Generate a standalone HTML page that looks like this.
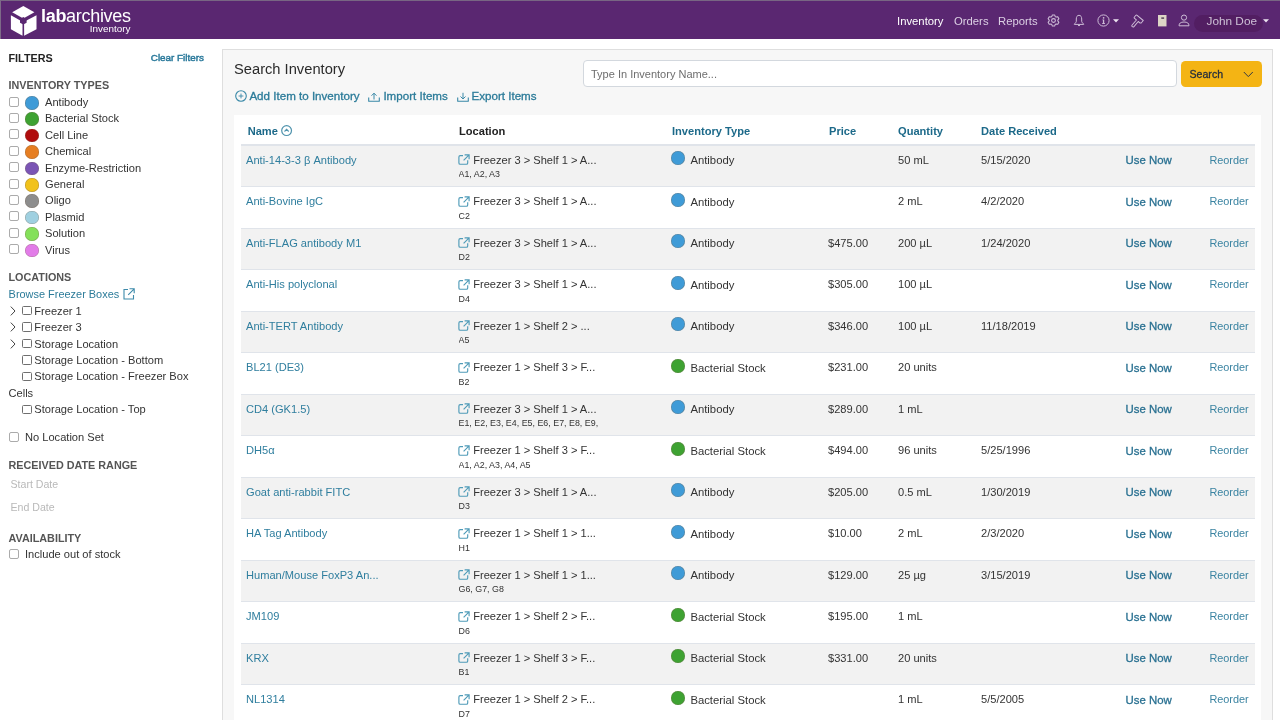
<!DOCTYPE html>
<html><head><meta charset="utf-8">
<style>
*{box-sizing:border-box;margin:0;padding:0}
html,body{width:1280px;height:720px;overflow:hidden;background:#fff;font-family:"Liberation Sans",sans-serif;color:#333;}
body{will-change:transform}
.a{position:absolute;white-space:nowrap}
#hdr{position:absolute;left:0;top:0;width:1280px;height:38.5px;background:#5a2771;border-top:1px solid #786683;border-left:1px solid #7d6a88}
.nav{position:absolute;top:14px;font-size:11.3px;color:#dcd0e4;line-height:14px}
.sb{font-size:11.1px;color:#333;line-height:14px}
.h{font-weight:bold;font-size:10.8px;color:#555;line-height:14px}
.cb{position:absolute;width:10.2px;height:10.2px;border:1px solid #ababab;border-radius:2px;background:#fff}
.dot{position:absolute;width:13.5px;height:13.5px;border-radius:50%;box-shadow:0 0 0 0.6px rgba(120,100,80,.45) inset}
.lnk{color:#2b7b99}
.med{-webkit-text-stroke:0.3px currentColor}
#panel{position:absolute;left:222px;top:49px;width:1051px;height:700px;background:#f7f7f7;border:1px solid #dedede}
#tbl{position:absolute;left:234px;top:115.2px;width:1027px;height:620px;background:#fff}
.row{position:absolute;left:241px;width:1014px;height:41.5px;border-bottom:1.5px solid #e0e4ea}
.row.g{background:#f2f2f2}
.t{position:absolute;font-size:11.1px;line-height:14px;color:#333;white-space:nowrap}
.nm{color:#2f7e9e}
.sub{position:absolute;font-size:8.9px;line-height:10px;color:#333;white-space:nowrap}
.th{position:absolute;top:123.6px;font-weight:bold;font-size:11.1px;line-height:14px;color:#1c6989;white-space:nowrap}
.use{color:#2a7192;font-size:11.4px}
.reo{color:#3b84a2;font-size:10.9px}
</style></head><body>
<div id="hdr"></div>
<svg class="a" style="left:0;top:0" width="48" height="40" viewBox="0 0 48 40">
<g fill="#fff">
<polygon points="23.3,6 34.4,12.3 23.3,18.6 12.2,12.3"/>
<polygon points="10.9,15.2 22.5,21.7 22.5,35.8 10.9,29.2"/>
<polygon points="36.5,15.2 24.1,21.7 24.1,35.8 36.5,29.2"/>
</g>
<polygon points="23.3,17 26.6,18.9 26.6,22.7 23.3,24.6 20,22.7 20,18.9" fill="#5a2771"/>
</svg>
<div class="a" style="left:41px;top:4.9px;font-size:18px;line-height:22px;color:#fff;letter-spacing:-0.3px"><b>lab</b>archives</div>
<div class="a" style="left:89.8px;top:22.8px;font-size:9.9px;line-height:12px;color:#fff">Inventory</div>
<div class="nav" style="left:897px;color:#fff">Inventory</div>
<div class="nav" style="left:954px">Orders</div>
<div class="nav" style="left:998px">Reports</div>
<svg class="a" style="left:1047.1px;top:14px" width="13" height="13" viewBox="0 0 13 13"><polygon points="4.00,3.00 4.75,2.57 5.37,0.91 7.63,0.91 8.28,2.59 9.02,3.02 10.77,2.73 11.90,4.69 10.78,6.09 10.78,6.94 11.90,8.31 10.77,10.27 9.00,10.00 8.25,10.43 7.63,12.09 5.37,12.09 4.72,10.41 3.98,9.98 2.23,10.27 1.10,8.31 2.22,6.91 2.22,6.06 1.10,4.69 2.23,2.73" fill="none" stroke="#cdbcd6" stroke-width="1.05" stroke-linejoin="round"/><circle cx="6.5" cy="6.5" r="1.9" fill="none" stroke="#cdbcd6" stroke-width="1.1"/></svg>
<svg class="a" style="left:1072.5px;top:14px" width="12" height="13" viewBox="0 0 12 13"><path d="M6 1.3 C4.1 1.3 3.3 2.9 3.3 5 V7.4 C3.3 8.5 1.6 9.4 1.3 10.4 H10.7 C10.4 9.4 8.7 8.5 8.7 7.4 V5 C8.7 2.9 7.9 1.3 6 1.3 Z" fill="none" stroke="#cdbcd6" stroke-width="1" stroke-linejoin="round"/><path d="M5 11.2 Q6 12.6 7 11.2" fill="none" stroke="#cdbcd6" stroke-width="1"/></svg>
<svg class="a" style="left:1096.5px;top:14.2px" width="13" height="13" viewBox="0 0 13 13"><circle cx="6.5" cy="6.5" r="5.6" fill="none" stroke="#cdbcd6" stroke-width="1"/><circle cx="6.6" cy="3.8" r="0.85" fill="#cdbcd6"/><path d="M5.4 5.5 H7.2 V9.0 H7.9 V9.9 H5.2 V9.0 H5.9 V6.3 H5.4 Z" fill="#cdbcd6"/></svg>
<svg class="a" style="left:1113.3px;top:18.8px" width="6" height="4" viewBox="0 0 6 4"><polygon points="0,0.2 6,0.2 3,3.4" fill="#ece4f0"/></svg>
<svg class="a" style="left:1129.5px;top:14px" width="15" height="14" viewBox="0 0 15 14"><path transform="translate(8.6 5.2) rotate(40)" d="M-4.6,-1.0 Q-4.6,-2 -3.6,-2 H4.4 L4.4 1.2 L3.6 2 H1.2 V8.6 Q1.2 9.8 0 9.8 Q-1.2 9.8 -1.2 8.6 V2 H-3.6 Q-4.6,2 -4.6,1 Z" fill="none" stroke="#cdbcd6" stroke-width="1" stroke-linejoin="round"/></svg>
<svg class="a" style="left:1158px;top:14.6px" width="9" height="12" viewBox="0 0 9 12"><rect x="0" y="0" width="8.5" height="11.4" fill="#ddd5c6"/><rect x="3.3" y="2.4" width="2.8" height="1.4" fill="#4a3a50"/></svg>
<svg class="a" style="left:1178px;top:14px" width="12" height="13" viewBox="0 0 12 13"><circle cx="6" cy="3.6" r="2.6" fill="none" stroke="#cdbcd6" stroke-width="1"/><path d="M1 11.8 Q1 8 6 8 Q11 8 11 11.8 Z" fill="none" stroke="#cdbcd6" stroke-width="1" stroke-linejoin="round"/></svg>
<div class="a" style="left:1193.5px;top:14.8px;width:69.5px;height:17.6px;border-radius:9px;background:#521e62"></div>
<div class="nav" style="left:1206.5px;font-size:11.8px;top:13.5px;color:#cdc1d6">John Doe</div>
<svg class="a" style="left:1262.8px;top:18.8px" width="6" height="4" viewBox="0 0 6 4"><polygon points="0,0.2 6,0.2 3,3.4" fill="#ece4f0"/></svg>
<div class="a h" style="left:8.5px;top:50.6px;color:#222">FILTERS</div>
<div class="a lnk med" style="left:150.8px;top:51px;font-size:9.85px;line-height:14px;color:#28789a;-webkit-text-stroke:0.45px #28789a">Clear Filters</div>
<div class="a h" style="left:8.5px;top:77.9px">INVENTORY TYPES</div>
<div class="cb" style="left:8.8px;top:96.5px"></div>
<div class="dot" style="left:25.4px;top:96.0px;background:#3f9bd7"></div>
<div class="a sb" style="left:45px;top:95.0px">Antibody</div>
<div class="cb" style="left:8.8px;top:112.9px"></div>
<div class="dot" style="left:25.4px;top:112.4px;background:#3ea232"></div>
<div class="a sb" style="left:45px;top:111.4px">Bacterial Stock</div>
<div class="cb" style="left:8.8px;top:129.3px"></div>
<div class="dot" style="left:25.4px;top:128.8px;background:#b00d0d"></div>
<div class="a sb" style="left:45px;top:127.8px">Cell Line</div>
<div class="cb" style="left:8.8px;top:145.7px"></div>
<div class="dot" style="left:25.4px;top:145.2px;background:#e67e22"></div>
<div class="a sb" style="left:45px;top:144.2px">Chemical</div>
<div class="cb" style="left:8.8px;top:162.1px"></div>
<div class="dot" style="left:25.4px;top:161.6px;background:#7b55b5"></div>
<div class="a sb" style="left:45px;top:160.6px">Enzyme-Restriction</div>
<div class="cb" style="left:8.8px;top:178.5px"></div>
<div class="dot" style="left:25.4px;top:178.0px;background:#f1c21b"></div>
<div class="a sb" style="left:45px;top:177.0px">General</div>
<div class="cb" style="left:8.8px;top:194.9px"></div>
<div class="dot" style="left:25.4px;top:194.4px;background:#8d8d8d"></div>
<div class="a sb" style="left:45px;top:193.4px">Oligo</div>
<div class="cb" style="left:8.8px;top:211.3px"></div>
<div class="dot" style="left:25.4px;top:210.8px;background:#9fd0e0"></div>
<div class="a sb" style="left:45px;top:209.8px">Plasmid</div>
<div class="cb" style="left:8.8px;top:227.7px"></div>
<div class="dot" style="left:25.4px;top:227.2px;background:#84e05a"></div>
<div class="a sb" style="left:45px;top:226.2px">Solution</div>
<div class="cb" style="left:8.8px;top:244.1px"></div>
<div class="dot" style="left:25.4px;top:243.6px;background:#e27ce8"></div>
<div class="a sb" style="left:45px;top:242.6px">Virus</div>
<div class="a h" style="left:8.5px;top:269.8px">LOCATIONS</div>
<div class="a sb lnk" style="left:8.6px;top:287px;font-size:10.95px">Browse Freezer Boxes</div>
<svg class="a" style="left:122.5px;top:287.5px" width="12" height="12" viewBox="0 0 12 12"><path d="M5 1.5 H1 V11 H10.5 V7" fill="none" stroke="#3d8aaa" stroke-width="1.1"/><path d="M6.5 0.8 H11.2 V5.3 M11.2 0.8 L5.2 6.8" fill="none" stroke="#3d8aaa" stroke-width="1.1"/></svg>
<svg class="a" style="left:10px;top:305.6px" width="6" height="10" viewBox="0 0 6 10"><path d="M0.8 0.6 L5 5 L0.8 9.4" fill="none" stroke="#444" stroke-width="1"/></svg>
<div class="cb" style="left:22.3px;top:305.8px;border-color:#6f6f6f;border-radius:1.5px;width:10px;height:9.6px"></div>
<div class="a sb" style="left:34.3px;top:303.6px">Freezer 1</div>
<svg class="a" style="left:10px;top:322.0px" width="6" height="10" viewBox="0 0 6 10"><path d="M0.8 0.6 L5 5 L0.8 9.4" fill="none" stroke="#444" stroke-width="1"/></svg>
<div class="cb" style="left:22.3px;top:322.2px;border-color:#6f6f6f;border-radius:1.5px;width:10px;height:9.6px"></div>
<div class="a sb" style="left:34.3px;top:320.0px">Freezer 3</div>
<svg class="a" style="left:10px;top:338.5px" width="6" height="10" viewBox="0 0 6 10"><path d="M0.8 0.6 L5 5 L0.8 9.4" fill="none" stroke="#444" stroke-width="1"/></svg>
<div class="cb" style="left:22.3px;top:338.7px;border-color:#6f6f6f;border-radius:1.5px;width:10px;height:9.6px"></div>
<div class="a sb" style="left:34.3px;top:336.5px">Storage Location</div>
<div class="cb" style="left:22.3px;top:355.1px;border-color:#6f6f6f;border-radius:1.5px;width:10px;height:9.6px"></div>
<div class="a sb" style="left:34.3px;top:352.9px">Storage Location - Bottom</div>
<div class="cb" style="left:22.3px;top:371.6px;border-color:#6f6f6f;border-radius:1.5px;width:10px;height:9.6px"></div>
<div class="a sb" style="left:34.3px;top:369.4px">Storage Location - Freezer Box</div>
<div class="a sb" style="left:8.5px;top:385.8px">Cells</div>
<div class="cb" style="left:22.3px;top:404.5px;border-color:#6f6f6f;border-radius:1.5px;width:10px;height:9.6px"></div>
<div class="a sb" style="left:34.3px;top:402.3px">Storage Location - Top</div>
<div class="cb" style="left:8.8px;top:432px"></div>
<div class="a sb" style="left:25px;top:430px">No Location Set</div>
<div class="a h" style="left:8.5px;top:457.5px">RECEIVED DATE RANGE</div>
<div class="a sb" style="left:10.5px;top:476.5px;color:#b9b9b9;font-size:10.6px">Start Date</div>
<div class="a sb" style="left:10.5px;top:499.5px;color:#b9b9b9;font-size:10.6px">End Date</div>
<div class="a h" style="left:8.5px;top:530.5px">AVAILABILITY</div>
<div class="cb" style="left:8.8px;top:549px"></div>
<div class="a sb" style="left:25px;top:547px">Include out of stock</div>
<div id="panel"></div>
<div class="a" style="left:234px;top:59.5px;font-size:14.7px;line-height:18px;color:#2b2b2b">Search Inventory</div>
<div class="a" style="left:582.5px;top:60.4px;width:594px;height:26.2px;background:#fff;border:1px solid #d3d8de;border-radius:4px"></div>
<div class="a" style="left:591px;top:66.6px;font-size:11px;line-height:14px;color:#6e6e6e">Type In Inventory Name...</div>
<div class="a" style="left:1180.5px;top:60.7px;width:81.3px;height:26.2px;background:#f4b414;border-radius:4.5px"></div>
<div class="a med" style="left:1189.5px;top:66.7px;font-size:10.6px;line-height:14px;color:#27303d">Search</div>
<svg class="a" style="left:1242.5px;top:71px" width="11" height="7" viewBox="0 0 11 7"><path d="M0.8 1 L5.3 5.6 L9.8 1" fill="none" stroke="#333a44" stroke-width="1"/></svg>
<svg class="a" style="left:234.5px;top:90px" width="12" height="12" viewBox="0 0 12 12"><circle cx="6" cy="6" r="5.3" fill="none" stroke="#3a89a8" stroke-width="1.1"/><path d="M6 3.6 V8.4 M3.6 6 H8.4" stroke="#3a89a8" stroke-width="0.9"/></svg>
<div class="a lnk med" style="left:249.4px;top:89.3px;font-size:11.6px;line-height:14px">Add Item to Inventory</div>
<svg class="a" style="left:368px;top:92px" width="12" height="10" viewBox="0 0 12 10"><path d="M0.7 5.5 V9.2 H11.3 V5.5" fill="none" stroke="#3a89a8" stroke-width="1.1" stroke-linejoin="round"/><path d="M6 1.2 V7.5 M3.5 3.7 L6 1.2 L8.5 3.7" fill="none" stroke="#3a89a8" stroke-width="1"/></svg>
<div class="a lnk med" style="left:383.4px;top:89.3px;font-size:11.6px;line-height:14px">Import Items</div>
<svg class="a" style="left:456.5px;top:92px" width="12" height="10" viewBox="0 0 12 10"><path d="M0.7 5.5 V9.2 H11.3 V5.5" fill="none" stroke="#3a89a8" stroke-width="1.1" stroke-linejoin="round"/><path d="M6 0.8 V7 M3.5 4.5 L6 7 L8.5 4.5" fill="none" stroke="#3a89a8" stroke-width="1"/></svg>
<div class="a lnk med" style="left:471.5px;top:89.3px;font-size:11.6px;line-height:14px">Export Items</div>
<div id="tbl"></div>
<div class="th" style="left:247.7px">Name</div>
<svg class="a" style="left:281px;top:124.6px" width="12" height="12" viewBox="0 0 12 12"><circle cx="5.6" cy="5.6" r="4.9" fill="none" stroke="#4f93ad" stroke-width="1.2"/><path d="M3.5 6.5 L5.6 4.4 L7.7 6.5" fill="none" stroke="#4f93ad" stroke-width="1.1"/></svg>
<div class="th" style="left:459px;color:#222">Location</div>
<div class="th" style="left:672px">Inventory Type</div>
<div class="th" style="left:829px">Price</div>
<div class="th" style="left:898px">Quantity</div>
<div class="th" style="left:981px">Date Received</div>
<div class="a" style="left:241px;top:144.45px;width:1014px;height:1.5px;background:#e0e4ea"></div>
<div class="row g" style="top:145.95px"></div>
<div class="t nm" style="left:246px;top:152.55px">Anti-14-3-3 β Antibody</div>
<svg class="a" style="left:458px;top:154.00px" width="12" height="11" viewBox="0 0 12 11"><path d="M5 1.6 H2.2 Q0.9 1.6 0.9 2.9 V8.9 Q0.9 10.2 2.2 10.2 H8.4 Q9.7 10.2 9.7 8.9 V6.2" fill="none" stroke="#4f9bb8" stroke-width="1.15"/><path d="M6.6 0.8 H11.1 V5.3 M11.1 0.8 L5.6 6.3" fill="none" stroke="#4f9bb8" stroke-width="1.15"/></svg>
<div class="t" style="left:473.2px;top:152.55px">Freezer 3 &gt; Shelf 1 &gt; A...</div>
<div class="sub" style="left:458.5px;top:169.20px;width:140px;overflow:hidden">A1, A2, A3</div>
<div class="dot" style="left:670.9px;top:151.30px;background:#3f9bd7;width:13.7px;height:13.9px"></div>
<div class="t" style="left:690.4px;top:153.05px;font-size:11.3px">Antibody</div>
<div class="t" style="left:898px;top:152.55px">50 mL</div>
<div class="t" style="left:981px;top:152.55px">5/15/2020</div>
<div class="t use med" style="left:1125.6px;top:153.25px">Use Now</div>
<div class="t reo" style="left:1209.4px;top:152.55px">Reorder</div>
<div class="row" style="top:187.45px"></div>
<div class="t nm" style="left:246px;top:194.05px">Anti-Bovine IgC</div>
<svg class="a" style="left:458px;top:195.50px" width="12" height="11" viewBox="0 0 12 11"><path d="M5 1.6 H2.2 Q0.9 1.6 0.9 2.9 V8.9 Q0.9 10.2 2.2 10.2 H8.4 Q9.7 10.2 9.7 8.9 V6.2" fill="none" stroke="#4f9bb8" stroke-width="1.15"/><path d="M6.6 0.8 H11.1 V5.3 M11.1 0.8 L5.6 6.3" fill="none" stroke="#4f9bb8" stroke-width="1.15"/></svg>
<div class="t" style="left:473.2px;top:194.05px">Freezer 3 &gt; Shelf 1 &gt; A...</div>
<div class="sub" style="left:458.5px;top:210.70px;width:140px;overflow:hidden">C2</div>
<div class="dot" style="left:670.9px;top:192.80px;background:#3f9bd7;width:13.7px;height:13.9px"></div>
<div class="t" style="left:690.4px;top:194.55px;font-size:11.3px">Antibody</div>
<div class="t" style="left:898px;top:194.05px">2 mL</div>
<div class="t" style="left:981px;top:194.05px">4/2/2020</div>
<div class="t use med" style="left:1125.6px;top:194.75px">Use Now</div>
<div class="t reo" style="left:1209.4px;top:194.05px">Reorder</div>
<div class="row g" style="top:228.95px"></div>
<div class="t nm" style="left:246px;top:235.55px">Anti-FLAG antibody M1</div>
<svg class="a" style="left:458px;top:237.00px" width="12" height="11" viewBox="0 0 12 11"><path d="M5 1.6 H2.2 Q0.9 1.6 0.9 2.9 V8.9 Q0.9 10.2 2.2 10.2 H8.4 Q9.7 10.2 9.7 8.9 V6.2" fill="none" stroke="#4f9bb8" stroke-width="1.15"/><path d="M6.6 0.8 H11.1 V5.3 M11.1 0.8 L5.6 6.3" fill="none" stroke="#4f9bb8" stroke-width="1.15"/></svg>
<div class="t" style="left:473.2px;top:235.55px">Freezer 3 &gt; Shelf 1 &gt; A...</div>
<div class="sub" style="left:458.5px;top:252.20px;width:140px;overflow:hidden">D2</div>
<div class="dot" style="left:670.9px;top:234.30px;background:#3f9bd7;width:13.7px;height:13.9px"></div>
<div class="t" style="left:690.4px;top:236.05px;font-size:11.3px">Antibody</div>
<div class="t" style="left:828px;top:235.55px">$475.00</div>
<div class="t" style="left:898px;top:235.55px">200 µL</div>
<div class="t" style="left:981px;top:235.55px">1/24/2020</div>
<div class="t use med" style="left:1125.6px;top:236.25px">Use Now</div>
<div class="t reo" style="left:1209.4px;top:235.55px">Reorder</div>
<div class="row" style="top:270.45px"></div>
<div class="t nm" style="left:246px;top:277.05px">Anti-His polyclonal</div>
<svg class="a" style="left:458px;top:278.50px" width="12" height="11" viewBox="0 0 12 11"><path d="M5 1.6 H2.2 Q0.9 1.6 0.9 2.9 V8.9 Q0.9 10.2 2.2 10.2 H8.4 Q9.7 10.2 9.7 8.9 V6.2" fill="none" stroke="#4f9bb8" stroke-width="1.15"/><path d="M6.6 0.8 H11.1 V5.3 M11.1 0.8 L5.6 6.3" fill="none" stroke="#4f9bb8" stroke-width="1.15"/></svg>
<div class="t" style="left:473.2px;top:277.05px">Freezer 3 &gt; Shelf 1 &gt; A...</div>
<div class="sub" style="left:458.5px;top:293.70px;width:140px;overflow:hidden">D4</div>
<div class="dot" style="left:670.9px;top:275.80px;background:#3f9bd7;width:13.7px;height:13.9px"></div>
<div class="t" style="left:690.4px;top:277.55px;font-size:11.3px">Antibody</div>
<div class="t" style="left:828px;top:277.05px">$305.00</div>
<div class="t" style="left:898px;top:277.05px">100 µL</div>
<div class="t use med" style="left:1125.6px;top:277.75px">Use Now</div>
<div class="t reo" style="left:1209.4px;top:277.05px">Reorder</div>
<div class="row g" style="top:311.95px"></div>
<div class="t nm" style="left:246px;top:318.55px">Anti-TERT Antibody</div>
<svg class="a" style="left:458px;top:320.00px" width="12" height="11" viewBox="0 0 12 11"><path d="M5 1.6 H2.2 Q0.9 1.6 0.9 2.9 V8.9 Q0.9 10.2 2.2 10.2 H8.4 Q9.7 10.2 9.7 8.9 V6.2" fill="none" stroke="#4f9bb8" stroke-width="1.15"/><path d="M6.6 0.8 H11.1 V5.3 M11.1 0.8 L5.6 6.3" fill="none" stroke="#4f9bb8" stroke-width="1.15"/></svg>
<div class="t" style="left:473.2px;top:318.55px">Freezer 1 &gt; Shelf 2 &gt; ...</div>
<div class="sub" style="left:458.5px;top:335.20px;width:140px;overflow:hidden">A5</div>
<div class="dot" style="left:670.9px;top:317.30px;background:#3f9bd7;width:13.7px;height:13.9px"></div>
<div class="t" style="left:690.4px;top:319.05px;font-size:11.3px">Antibody</div>
<div class="t" style="left:828px;top:318.55px">$346.00</div>
<div class="t" style="left:898px;top:318.55px">100 µL</div>
<div class="t" style="left:981px;top:318.55px">11/18/2019</div>
<div class="t use med" style="left:1125.6px;top:319.25px">Use Now</div>
<div class="t reo" style="left:1209.4px;top:318.55px">Reorder</div>
<div class="row" style="top:353.45px"></div>
<div class="t nm" style="left:246px;top:360.05px">BL21 (DE3)</div>
<svg class="a" style="left:458px;top:361.50px" width="12" height="11" viewBox="0 0 12 11"><path d="M5 1.6 H2.2 Q0.9 1.6 0.9 2.9 V8.9 Q0.9 10.2 2.2 10.2 H8.4 Q9.7 10.2 9.7 8.9 V6.2" fill="none" stroke="#4f9bb8" stroke-width="1.15"/><path d="M6.6 0.8 H11.1 V5.3 M11.1 0.8 L5.6 6.3" fill="none" stroke="#4f9bb8" stroke-width="1.15"/></svg>
<div class="t" style="left:473.2px;top:360.05px">Freezer 1 &gt; Shelf 3 &gt; F...</div>
<div class="sub" style="left:458.5px;top:376.70px;width:140px;overflow:hidden">B2</div>
<div class="dot" style="left:670.9px;top:358.80px;background:#3ea232;width:13.7px;height:13.9px"></div>
<div class="t" style="left:690.4px;top:360.55px;font-size:11.3px">Bacterial Stock</div>
<div class="t" style="left:828px;top:360.05px">$231.00</div>
<div class="t" style="left:898px;top:360.05px">20 units</div>
<div class="t use med" style="left:1125.6px;top:360.75px">Use Now</div>
<div class="t reo" style="left:1209.4px;top:360.05px">Reorder</div>
<div class="row g" style="top:394.95px"></div>
<div class="t nm" style="left:246px;top:401.55px">CD4 (GK1.5)</div>
<svg class="a" style="left:458px;top:403.00px" width="12" height="11" viewBox="0 0 12 11"><path d="M5 1.6 H2.2 Q0.9 1.6 0.9 2.9 V8.9 Q0.9 10.2 2.2 10.2 H8.4 Q9.7 10.2 9.7 8.9 V6.2" fill="none" stroke="#4f9bb8" stroke-width="1.15"/><path d="M6.6 0.8 H11.1 V5.3 M11.1 0.8 L5.6 6.3" fill="none" stroke="#4f9bb8" stroke-width="1.15"/></svg>
<div class="t" style="left:473.2px;top:401.55px">Freezer 3 &gt; Shelf 1 &gt; A...</div>
<div class="sub" style="left:458.5px;top:418.20px;width:140px;overflow:hidden">E1, E2, E3, E4, E5, E6, E7, E8, E9, E</div>
<div class="dot" style="left:670.9px;top:400.30px;background:#3f9bd7;width:13.7px;height:13.9px"></div>
<div class="t" style="left:690.4px;top:402.05px;font-size:11.3px">Antibody</div>
<div class="t" style="left:828px;top:401.55px">$289.00</div>
<div class="t" style="left:898px;top:401.55px">1 mL</div>
<div class="t use med" style="left:1125.6px;top:402.25px">Use Now</div>
<div class="t reo" style="left:1209.4px;top:401.55px">Reorder</div>
<div class="row" style="top:436.45px"></div>
<div class="t nm" style="left:246px;top:443.05px">DH5α</div>
<svg class="a" style="left:458px;top:444.50px" width="12" height="11" viewBox="0 0 12 11"><path d="M5 1.6 H2.2 Q0.9 1.6 0.9 2.9 V8.9 Q0.9 10.2 2.2 10.2 H8.4 Q9.7 10.2 9.7 8.9 V6.2" fill="none" stroke="#4f9bb8" stroke-width="1.15"/><path d="M6.6 0.8 H11.1 V5.3 M11.1 0.8 L5.6 6.3" fill="none" stroke="#4f9bb8" stroke-width="1.15"/></svg>
<div class="t" style="left:473.2px;top:443.05px">Freezer 1 &gt; Shelf 3 &gt; F...</div>
<div class="sub" style="left:458.5px;top:459.70px;width:140px;overflow:hidden">A1, A2, A3, A4, A5</div>
<div class="dot" style="left:670.9px;top:441.80px;background:#3ea232;width:13.7px;height:13.9px"></div>
<div class="t" style="left:690.4px;top:443.55px;font-size:11.3px">Bacterial Stock</div>
<div class="t" style="left:828px;top:443.05px">$494.00</div>
<div class="t" style="left:898px;top:443.05px">96 units</div>
<div class="t" style="left:981px;top:443.05px">5/25/1996</div>
<div class="t use med" style="left:1125.6px;top:443.75px">Use Now</div>
<div class="t reo" style="left:1209.4px;top:443.05px">Reorder</div>
<div class="row g" style="top:477.95px"></div>
<div class="t nm" style="left:246px;top:484.55px">Goat anti-rabbit FITC</div>
<svg class="a" style="left:458px;top:486.00px" width="12" height="11" viewBox="0 0 12 11"><path d="M5 1.6 H2.2 Q0.9 1.6 0.9 2.9 V8.9 Q0.9 10.2 2.2 10.2 H8.4 Q9.7 10.2 9.7 8.9 V6.2" fill="none" stroke="#4f9bb8" stroke-width="1.15"/><path d="M6.6 0.8 H11.1 V5.3 M11.1 0.8 L5.6 6.3" fill="none" stroke="#4f9bb8" stroke-width="1.15"/></svg>
<div class="t" style="left:473.2px;top:484.55px">Freezer 3 &gt; Shelf 1 &gt; A...</div>
<div class="sub" style="left:458.5px;top:501.20px;width:140px;overflow:hidden">D3</div>
<div class="dot" style="left:670.9px;top:483.30px;background:#3f9bd7;width:13.7px;height:13.9px"></div>
<div class="t" style="left:690.4px;top:485.05px;font-size:11.3px">Antibody</div>
<div class="t" style="left:828px;top:484.55px">$205.00</div>
<div class="t" style="left:898px;top:484.55px">0.5 mL</div>
<div class="t" style="left:981px;top:484.55px">1/30/2019</div>
<div class="t use med" style="left:1125.6px;top:485.25px">Use Now</div>
<div class="t reo" style="left:1209.4px;top:484.55px">Reorder</div>
<div class="row" style="top:519.45px"></div>
<div class="t nm" style="left:246px;top:526.05px">HA Tag Antibody</div>
<svg class="a" style="left:458px;top:527.50px" width="12" height="11" viewBox="0 0 12 11"><path d="M5 1.6 H2.2 Q0.9 1.6 0.9 2.9 V8.9 Q0.9 10.2 2.2 10.2 H8.4 Q9.7 10.2 9.7 8.9 V6.2" fill="none" stroke="#4f9bb8" stroke-width="1.15"/><path d="M6.6 0.8 H11.1 V5.3 M11.1 0.8 L5.6 6.3" fill="none" stroke="#4f9bb8" stroke-width="1.15"/></svg>
<div class="t" style="left:473.2px;top:526.05px">Freezer 1 &gt; Shelf 1 &gt; 1...</div>
<div class="sub" style="left:458.5px;top:542.70px;width:140px;overflow:hidden">H1</div>
<div class="dot" style="left:670.9px;top:524.80px;background:#3f9bd7;width:13.7px;height:13.9px"></div>
<div class="t" style="left:690.4px;top:526.55px;font-size:11.3px">Antibody</div>
<div class="t" style="left:828px;top:526.05px">$10.00</div>
<div class="t" style="left:898px;top:526.05px">2 mL</div>
<div class="t" style="left:981px;top:526.05px">2/3/2020</div>
<div class="t use med" style="left:1125.6px;top:526.75px">Use Now</div>
<div class="t reo" style="left:1209.4px;top:526.05px">Reorder</div>
<div class="row g" style="top:560.95px"></div>
<div class="t nm" style="left:246px;top:567.55px">Human/Mouse FoxP3 An...</div>
<svg class="a" style="left:458px;top:569.00px" width="12" height="11" viewBox="0 0 12 11"><path d="M5 1.6 H2.2 Q0.9 1.6 0.9 2.9 V8.9 Q0.9 10.2 2.2 10.2 H8.4 Q9.7 10.2 9.7 8.9 V6.2" fill="none" stroke="#4f9bb8" stroke-width="1.15"/><path d="M6.6 0.8 H11.1 V5.3 M11.1 0.8 L5.6 6.3" fill="none" stroke="#4f9bb8" stroke-width="1.15"/></svg>
<div class="t" style="left:473.2px;top:567.55px">Freezer 1 &gt; Shelf 1 &gt; 1...</div>
<div class="sub" style="left:458.5px;top:584.20px;width:140px;overflow:hidden">G6, G7, G8</div>
<div class="dot" style="left:670.9px;top:566.30px;background:#3f9bd7;width:13.7px;height:13.9px"></div>
<div class="t" style="left:690.4px;top:568.05px;font-size:11.3px">Antibody</div>
<div class="t" style="left:828px;top:567.55px">$129.00</div>
<div class="t" style="left:898px;top:567.55px">25 µg</div>
<div class="t" style="left:981px;top:567.55px">3/15/2019</div>
<div class="t use med" style="left:1125.6px;top:568.25px">Use Now</div>
<div class="t reo" style="left:1209.4px;top:567.55px">Reorder</div>
<div class="row" style="top:602.45px"></div>
<div class="t nm" style="left:246px;top:609.05px">JM109</div>
<svg class="a" style="left:458px;top:610.50px" width="12" height="11" viewBox="0 0 12 11"><path d="M5 1.6 H2.2 Q0.9 1.6 0.9 2.9 V8.9 Q0.9 10.2 2.2 10.2 H8.4 Q9.7 10.2 9.7 8.9 V6.2" fill="none" stroke="#4f9bb8" stroke-width="1.15"/><path d="M6.6 0.8 H11.1 V5.3 M11.1 0.8 L5.6 6.3" fill="none" stroke="#4f9bb8" stroke-width="1.15"/></svg>
<div class="t" style="left:473.2px;top:609.05px">Freezer 1 &gt; Shelf 2 &gt; F...</div>
<div class="sub" style="left:458.5px;top:625.70px;width:140px;overflow:hidden">D6</div>
<div class="dot" style="left:670.9px;top:607.80px;background:#3ea232;width:13.7px;height:13.9px"></div>
<div class="t" style="left:690.4px;top:609.55px;font-size:11.3px">Bacterial Stock</div>
<div class="t" style="left:828px;top:609.05px">$195.00</div>
<div class="t" style="left:898px;top:609.05px">1 mL</div>
<div class="t use med" style="left:1125.6px;top:609.75px">Use Now</div>
<div class="t reo" style="left:1209.4px;top:609.05px">Reorder</div>
<div class="row g" style="top:643.95px"></div>
<div class="t nm" style="left:246px;top:650.55px">KRX</div>
<svg class="a" style="left:458px;top:652.00px" width="12" height="11" viewBox="0 0 12 11"><path d="M5 1.6 H2.2 Q0.9 1.6 0.9 2.9 V8.9 Q0.9 10.2 2.2 10.2 H8.4 Q9.7 10.2 9.7 8.9 V6.2" fill="none" stroke="#4f9bb8" stroke-width="1.15"/><path d="M6.6 0.8 H11.1 V5.3 M11.1 0.8 L5.6 6.3" fill="none" stroke="#4f9bb8" stroke-width="1.15"/></svg>
<div class="t" style="left:473.2px;top:650.55px">Freezer 1 &gt; Shelf 3 &gt; F...</div>
<div class="sub" style="left:458.5px;top:667.20px;width:140px;overflow:hidden">B1</div>
<div class="dot" style="left:670.9px;top:649.30px;background:#3ea232;width:13.7px;height:13.9px"></div>
<div class="t" style="left:690.4px;top:651.05px;font-size:11.3px">Bacterial Stock</div>
<div class="t" style="left:828px;top:650.55px">$331.00</div>
<div class="t" style="left:898px;top:650.55px">20 units</div>
<div class="t use med" style="left:1125.6px;top:651.25px">Use Now</div>
<div class="t reo" style="left:1209.4px;top:650.55px">Reorder</div>
<div class="row" style="top:685.45px"></div>
<div class="t nm" style="left:246px;top:692.05px">NL1314</div>
<svg class="a" style="left:458px;top:693.50px" width="12" height="11" viewBox="0 0 12 11"><path d="M5 1.6 H2.2 Q0.9 1.6 0.9 2.9 V8.9 Q0.9 10.2 2.2 10.2 H8.4 Q9.7 10.2 9.7 8.9 V6.2" fill="none" stroke="#4f9bb8" stroke-width="1.15"/><path d="M6.6 0.8 H11.1 V5.3 M11.1 0.8 L5.6 6.3" fill="none" stroke="#4f9bb8" stroke-width="1.15"/></svg>
<div class="t" style="left:473.2px;top:692.05px">Freezer 1 &gt; Shelf 2 &gt; F...</div>
<div class="sub" style="left:458.5px;top:708.70px;width:140px;overflow:hidden">D7</div>
<div class="dot" style="left:670.9px;top:690.80px;background:#3ea232;width:13.7px;height:13.9px"></div>
<div class="t" style="left:690.4px;top:692.55px;font-size:11.3px">Bacterial Stock</div>
<div class="t" style="left:898px;top:692.05px">1 mL</div>
<div class="t" style="left:981px;top:692.05px">5/5/2005</div>
<div class="t use med" style="left:1125.6px;top:692.75px">Use Now</div>
<div class="t reo" style="left:1209.4px;top:692.05px">Reorder</div>
<div class="row g" style="top:726.95px"></div>
</body></html>
